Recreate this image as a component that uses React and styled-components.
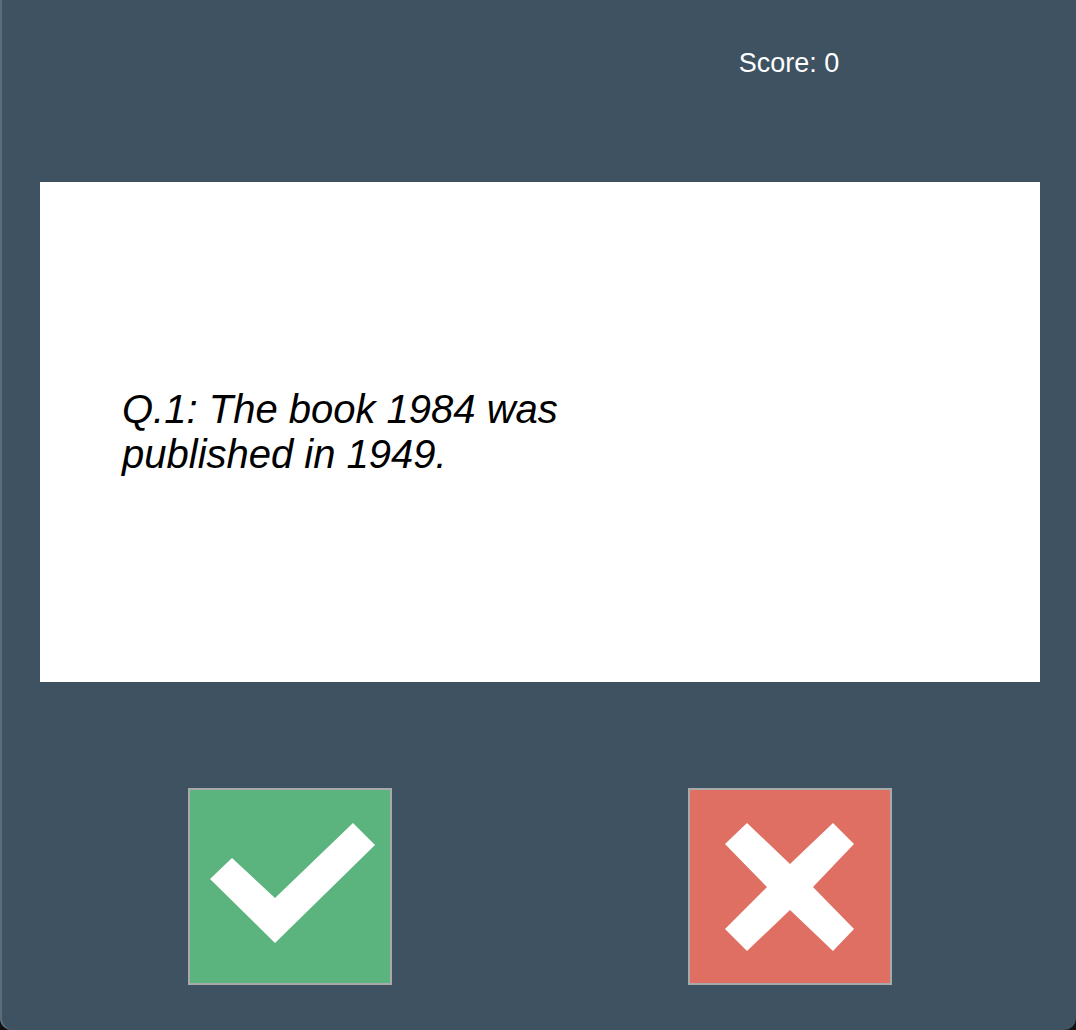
import styled, { createGlobalStyle } from "styled-components";

const GlobalStyle = createGlobalStyle`
  html, body {
    margin: 0;
    padding: 0;
    background: #111;
  }
`

const Window = styled.div`
  box-sizing: border-box;
  width: 1076px;
  height: 1030px;
  padding-left: 40px;
  background-color: #3e5261;
  box-shadow: inset 2px 0 0 #5c6c78;
  border-radius: 0 0 12px 12px;
  display: flex;
  flex-direction: column;
  align-items: flex-start;
  font-family: "Liberation Sans", Arial, sans-serif;
`
const Header = styled.div`
  width: 1000px;
  height: 182px;
  box-sizing: border-box;
  padding-top: 48px;
  display: grid;
  grid-template-columns: 1fr 1fr;
  align-items: start;
`
const Score = styled.div`
  grid-column: 2;
  justify-self: center;
  margin-right: 2px;
  color: white;
  font-size: 27px;
`
const Card = styled.div`
  width: 1000px;
  height: 500px;
  box-sizing: border-box;
  padding-left: 82px;
  background: white;
  display: flex;
  align-items: center;
`
const Question = styled.p`
  margin: 0;
  max-width: 480px;
  font-size: 40px;
  font-style: italic;
  color: black;
`
const Answers = styled.div`
  width: 1000px;
  margin-top: 106px;
  display: grid;
  grid-template-columns: 1fr 1fr;
  justify-items: center;
`
const AnswerButton = styled.button`
  width: 204px;
  height: 197px;
  padding: 0;
  box-sizing: border-box;
  border: 2px solid #a7a9ab;
  background-color: ${props => props.$color};
  display: flex;
  align-items: center;
  justify-content: center;
  cursor: pointer;
`

function CheckIcon() {
  return (
    <svg width="200" height="193" viewBox="2 2 200 193">
      <polygon points="22,91 44,70 87,110 165,35 187,57 87,155" fill="white" />
    </svg>
  )
}

function CrossIcon() {
  return (
    <svg width="200" height="193" viewBox="2 2 200 193">
      <polygon
        points="37,56 59,35 102,76 145,35 166,56 125,99 166,141 145,163 102,122 59,163 37,141 79,99"
        fill="white"
      />
    </svg>
  )
}

function App() {
  return (
    <>
      <GlobalStyle />
      <Window>
        <Header>
          <Score>Score: 0</Score>
        </Header>
        <Card>
          <Question>Q.1: The book 1984 was published in 1949.</Question>
        </Card>
        <Answers>
          <AnswerButton $color="#5bb37d" aria-label="True">
            <CheckIcon />
          </AnswerButton>
          <AnswerButton $color="#df6f63" aria-label="False">
            <CrossIcon />
          </AnswerButton>
        </Answers>
      </Window>
    </>
  )
}

export default App
